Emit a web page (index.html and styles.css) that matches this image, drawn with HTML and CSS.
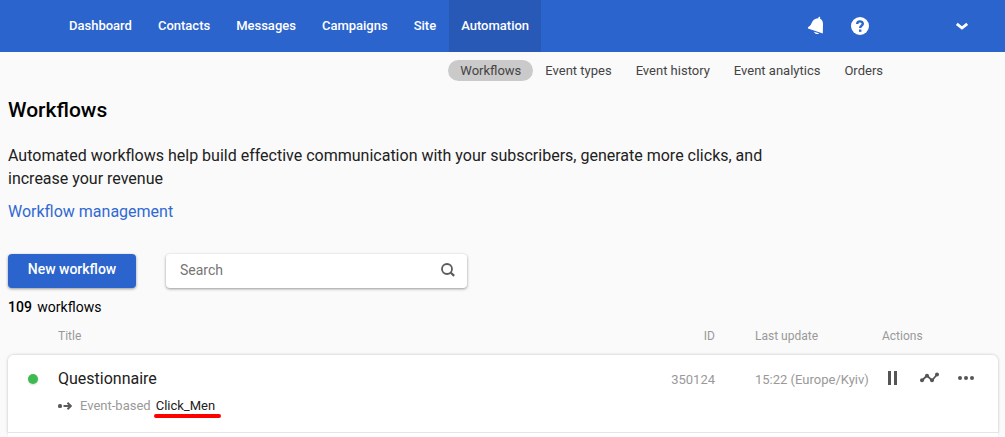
FILE: index.html
```html
<!DOCTYPE html>
<html lang="en">
<head>
<meta charset="utf-8">
<title>Workflows</title>
<link rel="stylesheet" href="styles.css">
</head>
<body>
<header class="topbar">
  <nav class="mainnav" aria-label="Main">
    <a href="#">Dashboard</a>
    <a href="#">Contacts</a>
    <a href="#">Messages</a>
    <a href="#">Campaigns</a>
    <a href="#">Site</a>
    <a href="#" class="active">Automation</a>
  </nav>
  <div class="tools">
    <button class="icon-btn" aria-label="Notifications">
      <svg width="18" height="20" viewBox="0 0 18 20" fill="#fff"><path d="M11.600 1.200c.3-.8 1.700-.5 1.600.5l-.2 1c2.100.9 3 2.800 3 5.300L15.800 17.400 1 12.400c-.3-.8 0-1.200.7-1.600 1.500-.8 2.100-1.800 2.700-3.200C5.600 4.500 7.500 2.400 11.200 2.200z"/><path d="M7 15.700l5 1.500c-.9 1.500-4.400 1-5-1.500z"/></svg>
    </button>
    <button class="icon-btn help" aria-label="Help">
      <svg width="18" height="18" viewBox="0 0 18 18"><circle cx="9" cy="9" r="9" fill="#fff"/><path d="M6.200 7C6.200 3.500 11.800 3.600 11.800 6.700 11.800 8.700 9.200 8.700 9.200 11" fill="none" stroke="#2b64cc" stroke-width="2.400"/><rect x="8" y="12.500" width="2.400" height="2.300" fill="#2b64cc"/></svg>
    </button>
    <button class="icon-btn account" aria-label="Account menu">
      <svg width="14" height="9" viewBox="0 0 14 9"><path d="M1.800 1.800 7 6 12.200 1.800" fill="none" stroke="#fff" stroke-width="2.800"/></svg>
    </button>
  </div>
</header>
<nav class="subnav" aria-label="Automation">
  <a href="#" class="current">Workflows</a>
  <a href="#">Event types</a>
  <a href="#">Event history</a>
  <a href="#">Event analytics</a>
  <a href="#">Orders</a>
</nav>
<main class="content">
  <h1>Workflows</h1>
  <p class="intro">Automated workflows help build effective communication with your subscribers, generate more clicks, and increase your revenue</p>
  <a class="doc-link" href="#">Workflow management</a>
  <div class="controls">
    <button class="primary">New workflow</button>
    <label class="search">
      <input type="text" placeholder="Search" aria-label="Search">
      <svg width="16" height="16" viewBox="0 0 16 16" fill="none" stroke="#5c5c5c"><circle cx="7" cy="6" r="5" stroke-width="1.800"/><path d="M10.500 9.500 14.200 12.900" stroke-width="2.200"/></svg>
    </label>
  </div>
  <p class="count"><strong>109</strong> workflows</p>
  <table class="list">
    <thead>
      <tr><th class="col-status"></th><th class="col-title">Title</th><th class="col-id">ID</th><th class="col-date">Last update</th><th class="col-actions">Actions</th></tr>
    </thead>
    <tbody>
      <tr class="item">
        <td class="col-status"><span class="dot"></span></td>
        <td class="col-title">
          <div class="name">Questionnaire</div>
          <div class="trigger">
            <svg width="14" height="10" viewBox="0 0 14 10" fill="none" stroke="#5c5c5c" stroke-width="2"><rect x="0" y="3" width="4" height="4" rx="1.500" fill="#5c5c5c" stroke="none"/><path d="M5.500 5h7M9.500 1.800 12.800 5 9.500 8.200"/></svg>
            <span>Event-based</span>
            <a href="#" class="event">Click_Men</a>
          </div>
        </td>
        <td class="col-id">350124</td>
        <td class="col-date">15:22 (Europe/Kyiv)</td>
        <td class="col-actions">
          <div class="actions">
            <button class="icon-btn" aria-label="Pause"><svg width="20" height="14" viewBox="0 0 20 14" fill="#555"><path d="M6 0h3v14H6zM12 0h3v14h-3z"/></svg></button>
            <button class="icon-btn" aria-label="Statistics"><svg width="20" height="14" viewBox="0 0 20 14" fill="#555" stroke="#555"><path d="M3 9.500 8 4.500 13 9.500 18 3.500" fill="none" stroke-width="1.800"/><g stroke="none"><circle cx="3" cy="9.300" r="2"/><circle cx="8" cy="4.700" r="2"/><circle cx="13" cy="9.300" r="2"/><circle cx="18" cy="3.500" r="2"/></g></svg></button>
            <button class="icon-btn" aria-label="More"><svg width="20" height="14" viewBox="0 0 20 14" fill="#555"><circle cx="4" cy="7" r="2"/><circle cx="10" cy="7" r="2"/><circle cx="16" cy="7" r="2"/></svg></button>
          </div>
        </td>
      </tr>
      <tr class="next"><td colspan="5"></td></tr>
    </tbody>
  </table>
</main>
</body>
</html>
```
FILE: styles.css
```css
* { box-sizing: border-box; }
body { margin: 0; background: #fafafa; color: #212121; font-family: Roboto, "Liberation Sans", sans-serif; }
a { color: inherit; text-decoration: none; }
button, input { font: inherit; }
svg { display: block; }

.topbar { display: flex; justify-content: space-between; height: 52px; padding-left: 56px; padding-right: 36px; background: #2b64cc; color: #fff; }
.mainnav { display: flex; font-size: 13px; font-weight: 500; line-height: 52px; }
.mainnav a { padding: 0 13px; }
.mainnav .active { padding: 0 12px; background: #2859b7; }
.tools { display: flex; align-items: center; }
.icon-btn { display: block; padding: 0; border: 0; background: none; }
.help { margin-left: 26px; }
.account { margin-left: 86px; }

.subnav { display: flex; justify-content: flex-end; padding: 8px 110px 0 12px; font-size: 13px; line-height: 21px; color: #444; }
.subnav a { padding: 0 12px; }
.subnav .current { border-radius: 11px; background: #cacaca; }

.content { padding: 0 7px 0 8px; }
h1 { margin: 17px 0 0; font-size: 21px; font-weight: 500; line-height: 24px; color: #000; }
.intro { max-width: 800px; margin: 22px 0 10px; font-size: 16px; line-height: 23px; }
.doc-link { display: block; width: fit-content; font-size: 16px; line-height: 23px; color: #3069d2; }
.controls { display: flex; gap: 30px; margin-top: 31px; }
.primary { width: 128px; height: 34px; padding: 0 0 4px; border: 0; border-radius: 4px; background: #2b64cc; color: #fff; font-size: 14px; font-weight: 500; box-shadow: 0 1px 3px rgba(0, 0, 0, .4); }
.search { display: flex; align-items: center; width: 301px; height: 34px; padding: 0 11px 0 14px; border-radius: 4px; background: #fff; box-shadow: 0 1px 3px rgba(0, 0, 0, .4); }
.search input { flex: 1; min-width: 0; padding: 0 0 2px; border: 0; outline: 0; background: none; font-size: 14px; }
.search input::placeholder { color: #757575; }
.count { margin: 9px 0 0; font-size: 14px; line-height: 20px; color: #000; }
.count strong { margin-right: 2px; font-weight: 500; }

.list { width: 100%; margin-top: 9px; border-spacing: 0; table-layout: fixed; text-align: left; }
.list th { height: 29px; padding: 0 0 9px; font-size: 12px; font-weight: 400; color: #999; }
.list td { padding: 0; vertical-align: top; background: #fff; }
.list tbody { border-radius: 6px; box-shadow: 0 0 3px rgba(0, 0, 0, .25); }
.col-status { width: 50px; }
.list .col-id { width: 120px; padding-right: 40px; text-align: right; }
.col-date { width: 127px; }
.col-actions { width: 116px; }
.item { height: 78px; font-size: 13px; color: #999; }
.item td { border-bottom: 1px solid #e5e5e5; }
.item td:first-child { border-top-left-radius: 6px; }
.item td:last-child { border-top-right-radius: 6px; }
.item .col-id, .item .col-date { padding-top: 15px; line-height: 20px; }
.dot { display: block; width: 10px; height: 10px; margin: 19px 0 0 20px; border-radius: 50%; background: #3dba50; box-shadow: 0 1px 2px rgba(0, 0, 0, .15); }
.name { margin-top: 12px; font-size: 16px; line-height: 24px; color: #212121; }
.trigger { display: flex; align-items: center; margin-top: 5px; line-height: 20px; }
.trigger span { margin: 0 3px 0 8px; }
.event { position: relative; padding: 0 2px; color: #212121; }
.event::after { content: ""; position: absolute; left: 0; right: -4px; bottom: -2px; height: 4px; border-radius: 2px; background: #ff0000; }
.actions { display: flex; gap: 17px; padding-top: 16px; }
.next { height: 4px; }
```
